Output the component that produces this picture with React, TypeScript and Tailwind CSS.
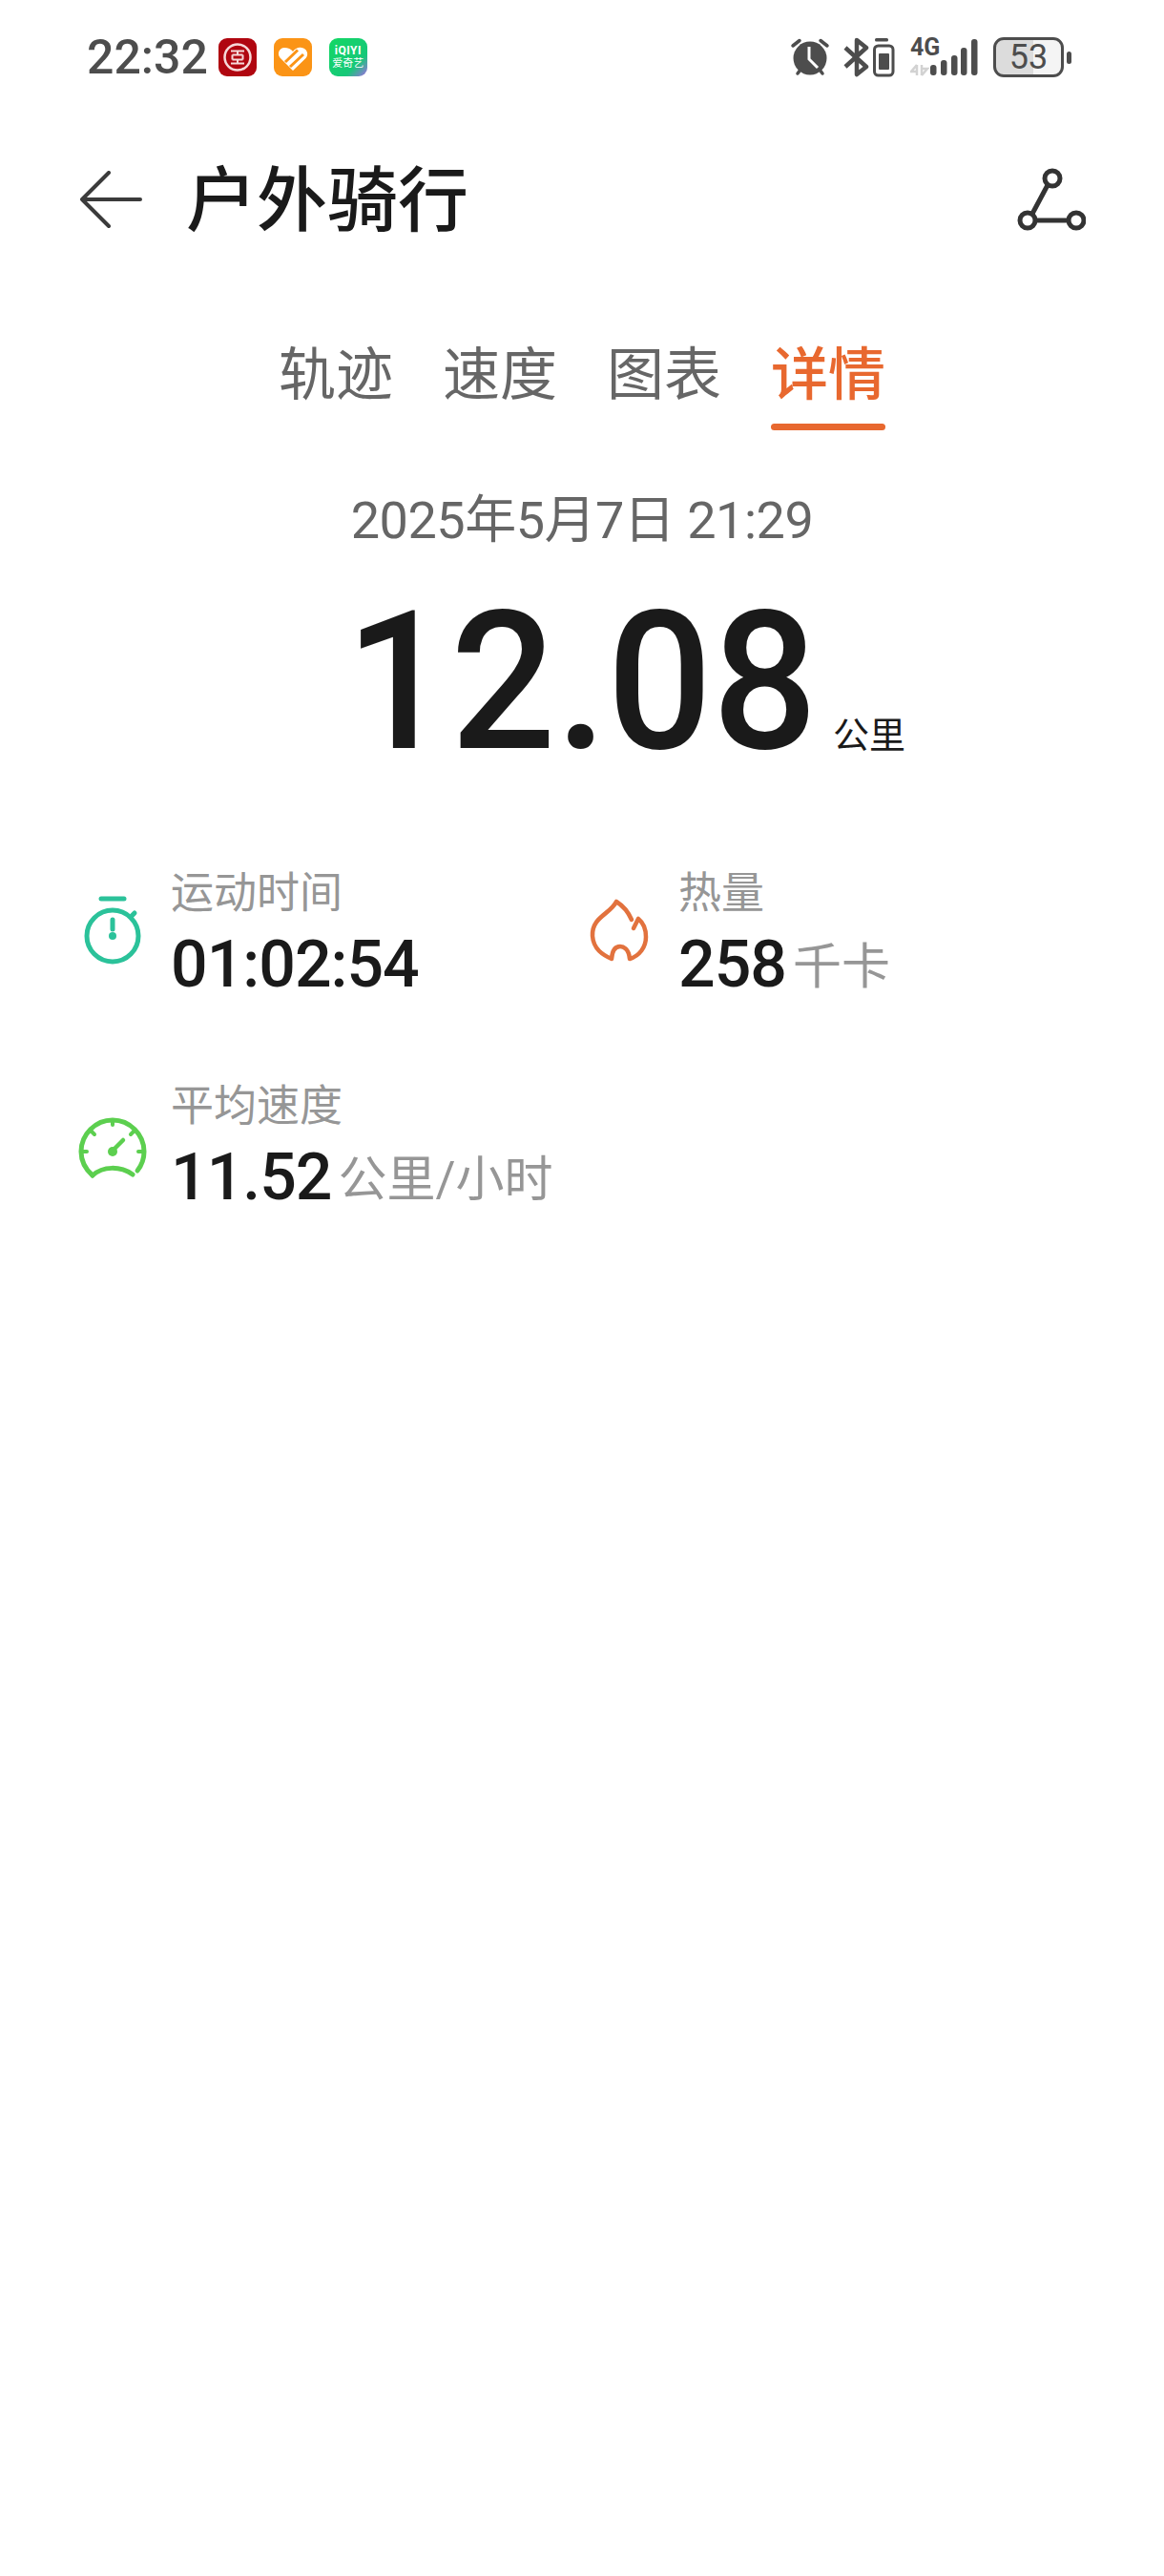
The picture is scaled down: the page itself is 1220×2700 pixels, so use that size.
import React from 'react';

const FONT = 'font-[Roboto,"Noto_Sans_CJK_SC",sans-serif]';

const Alarm = () => (
  <svg width="42" height="42" viewBox="0 0 42 42" fill="none">
    <circle cx="21" cy="22" r="17.5" fill="#4d4d4d" />
    <path d="M3 9 L10 3.5 M39 9 L32 3.5 M8 38 L11 34 M34 38 L31 34" stroke="#4d4d4d" strokeWidth="3.5" strokeLinecap="round" />
    <path d="M20 10 V23 L29 32" stroke="#fff" strokeWidth="3" />
  </svg>
);

const BluetoothBattery = () => (
  <svg width="56" height="42" viewBox="0 0 56 42" fill="none">
    <path d="M2 11 L24 31 L14 39 V3 L24 11 L2 31" stroke="#4d4d4d" strokeWidth="4.5" strokeLinejoin="round" />
    <rect x="33" y="1" width="14" height="3.5" rx="1.5" fill="#4d4d4d" />
    <rect x="32.5" y="9" width="19.5" height="31" rx="4" stroke="#4d4d4d" strokeWidth="3" />
    <rect x="37" y="17" width="11" height="17" rx="1" fill="#4d4d4d" />
  </svg>
);

const Signal = () => (
  <div className="relative w-[72px] h-[42px]">
    <span className="absolute left-0 top-[-1px] text-[25px] leading-[24px] font-bold text-[#4d4d4d] font-[Roboto,sans-serif]">4G</span>
    <svg className="absolute inset-0" width="72" height="42" viewBox="0 0 72 42" fill="none">
      <path d="M7 29 V40 M7 29 L1 36 H7 M12 40 V29 M12 40 L18 33 H12" stroke="#d2d2d2" strokeWidth="2.5" />
      <rect x="21" y="29" width="6.5" height="11" rx="3" fill="#4d4d4d" />
      <rect x="32" y="24" width="6.5" height="16" rx="3" fill="#4d4d4d" />
      <rect x="43" y="19" width="6.5" height="21" rx="3" fill="#4d4d4d" />
      <rect x="53" y="11" width="6.5" height="29" rx="3" fill="#4d4d4d" />
      <rect x="64" y="2" width="6.5" height="38" rx="3" fill="#4d4d4d" />
    </svg>
  </div>
);

const Battery = () => (
  <div className="flex items-center gap-[3px]">
    <div className="w-[74px] h-[42px] rounded-[11px] border-[3px] border-[#4d4d4d] bg-[linear-gradient(90deg,#dcdcdc_0%,#dcdcdc_57%,#f4f4f4_57%,#f4f4f4_100%)] flex items-center justify-center text-[36px] leading-none text-[#4d4d4d]">
      53
    </div>
    <div className="w-[5px] h-[13px] rounded-full bg-[#4d4d4d]" />
  </div>
);

const IcbcIcon = () => (
  <svg width="40" height="40" viewBox="0 0 40 40" fill="none">
    <rect width="40" height="40" rx="9" fill="#b00610" />
    <circle cx="20" cy="20" r="13.5" stroke="#f6d9d9" strokeWidth="2.5" />
    <path d="M13 13.5 H27 M13 26.5 H27 M20 13.5 V17.5 M20 22.5 V26.5 M14.5 17.5 H25.5 M14.5 22.5 H25.5 M14.5 17.5 V22.5 M25.5 17.5 V22.5" stroke="#f6d9d9" strokeWidth="2" />
  </svg>
);

const HeartIcon = () => (
  <svg width="40" height="40" viewBox="0 0 40 40" fill="none">
    <rect width="40" height="40" rx="9" fill="#fb9416" />
    <path d="M20 34 L6.5 20.5 C3 16 6 10 11 10 C15 10 18 11.5 20 14 C22 11 26 9 29 10 C35 11 37 17 33.5 21 Z" fill="#fff" />
    <path d="M12 25 L25 12.5 M17 30 L31 17" stroke="#fb9416" strokeWidth="3" />
  </svg>
);

const IqiyiIcon = () => (
  <div className="w-[40px] h-[40px] rounded-[9px] bg-[linear-gradient(135deg,#13d863_0%,#16c878_70%,#a469e8_100%)] flex flex-col items-center justify-center text-white leading-none">
    <span className="text-[12px] leading-[13px] font-bold tracking-[0.5px]">iQIYI</span>
    <span className="text-[11px] leading-[13px]">爱奇艺</span>
  </div>
);

const BackArrow = () => (
  <svg width="66" height="62" viewBox="0 0 66 62" fill="none">
    <path d="M2 30 H63 M30 2 L2 30 L30 58" stroke="#3b3b3b" strokeWidth="4" strokeLinecap="round" strokeLinejoin="round" />
  </svg>
);

const RouteIcon = () => (
  <svg className="mb-[4px]" width="74" height="68" viewBox="0 0 74 68" fill="none" stroke="#333" strokeWidth="5">
    <circle cx="39" cy="13" r="8" />
    <circle cx="13" cy="57" r="8" />
    <circle cx="64" cy="57" r="8" />
    <path d="M34 20 L18 50 M21 57 H56" />
  </svg>
);

const Stopwatch = () => (
  <svg width="76" height="76" viewBox="0 0 76 76" fill="none" stroke="#2bc29a" strokeWidth="5">
    <path d="M26 5 H50" strokeLinecap="round" />
    <circle cx="38" cy="44" r="27" />
    <path d="M38 27 V37" strokeLinecap="round" />
    <circle cx="38" cy="44" r="4" fill="#2bc29a" stroke="none" />
    <path d="M58 23 L61 20" strokeLinecap="round" />
  </svg>
);

const Flame = () => (
  <svg width="76" height="76" viewBox="0 0 76 76" fill="none" stroke="#e2723e" strokeWidth="4.5" strokeLinejoin="round" strokeLinecap="round">
    <path d="M34 9 C28 22 8 25 9 45 C10 59 20 65 29 69 C30 56 36 56 38 56 C41 56 47 58 48 69 C58 66 65 57 65 46 C65 38 62 31 57 27 L52 37 M34 9 C42 14 47 21 50 28" />
  </svg>
);

const Gauge = () => (
  <svg width="76" height="76" viewBox="0 0 76 76" fill="none" stroke="#5ccf4f" strokeWidth="5" strokeLinecap="round">
    <path d="M17 62 C9 55 5 47 5 37 C5 19 20 4 38 4 C56 4 71 19 71 37 C71 45 68 52 64 57" />
    <path d="M17 62 C28 52 46 52 59 61" />
    <path d="M38 5 V9 M15 15 L19 19 M61 15 L57 19 M6 37 H11 M70 37 H65" strokeWidth="4" />
    <path d="M38 36 L49 25" strokeWidth="4.5" />
    <circle cx="38" cy="37" r="5" fill="#5ccf4f" stroke="none" />
  </svg>
);

const Stat = ({ icon, iconTop, label, value, unit }: { icon: React.ReactNode; iconTop: string; label: string; value: string; unit?: string }) => (
  <div className="flex items-start gap-[23px]">
    <div className={`w-[76px] h-[76px] shrink-0 ${iconTop}`}>{icon}</div>
    <div>
      <div className="text-[45px] leading-[58px] text-[#969696]">{label}</div>
      <div className="flex items-baseline gap-[7px] mt-[7px] leading-[76px]">
        <span className="text-[68px] font-medium text-[#1a1a1a] tracking-[-1px]">{value}</span>
        {unit && <span className="text-[51px] text-[#969696] -translate-y-[3px]">{unit}</span>}
      </div>
    </div>
  </div>
);

export default function App() {
  return (
    <div className={`w-[1220px] h-[2700px] bg-white overflow-hidden ${FONT}`}>
      {/* Status bar */}
      <div className="flex items-center justify-between h-[60px] mt-[30px] pl-[91px] pr-[97px]">
        <div className="flex items-center">
          <span className="text-[50px] leading-none font-medium text-[#4d4d4d] mr-[11px]">22:32</span>
          <div className="flex items-center gap-[18px]">
            <IcbcIcon />
            <HeartIcon />
            <IqiyiIcon />
          </div>
        </div>
        <div className="flex items-center">
          <Alarm />
          <div className="w-[14px]" />
          <BluetoothBattery />
          <div className="w-[14px]" />
          <Signal />
          <div className="w-[15px]" />
          <Battery />
        </div>
      </div>

      {/* Header */}
      <div className="flex items-center justify-between h-[100px] mt-[70px] pl-[84px] pr-[82px]">
        <div className="flex items-center gap-[45px]">
          <BackArrow />
          <h1 className="text-[74px] leading-none font-medium text-[#1a1a1a] translate-y-[1px]">户外骑行</h1>
        </div>
        <RouteIcon />
      </div>

      {/* Tabs */}
      <div className="flex justify-center gap-[52px] mt-[94px]">
        {['轨迹', '速度', '图表', '详情'].map((tab) => (
          <div key={tab} className="flex flex-col items-center">
            <span className={tab === '详情' ? 'text-[60px] leading-[80px] font-medium text-[#e8682f]' : 'text-[60px] leading-[80px] text-[#666]'}>
              {tab}
            </span>
            <div className={tab === '详情' ? 'w-[120px] h-[7px] mt-[10px] rounded-full bg-[#e8682f]' : 'w-[120px] h-[7px] mt-[10px]'} />
          </div>
        ))}
      </div>

      {/* Summary */}
      <div className="text-center text-[54px] leading-[70px] text-[#666] tracking-[-0.5px] mt-[60px]">2025年5月7日 21:29</div>
      <div className="flex items-baseline pl-[362px] mt-[24px]">
        <span className="text-[202px] leading-[220px] font-medium text-[#1a1a1a] scale-x-[0.96] origin-left w-[500px]">12.08</span>
        <span className="text-[38px] text-[#1a1a1a] ml-[11px]">公里</span>
      </div>

      {/* Stats */}
      <div className="grid grid-cols-[532px_1fr] gap-y-[76px] pl-[80px] mt-[83px]">
        <Stat icon={<Stopwatch />} iconTop="mt-[29px]" label="运动时间" value="01:02:54" />
        <Stat icon={<Flame />} iconTop="mt-[28px]" label="热量" value="258" unit="千卡" />
        <Stat icon={<Gauge />} iconTop="mt-[39px]" label="平均速度" value="11.52" unit="公里/小时" />
      </div>
    </div>
  );
}
